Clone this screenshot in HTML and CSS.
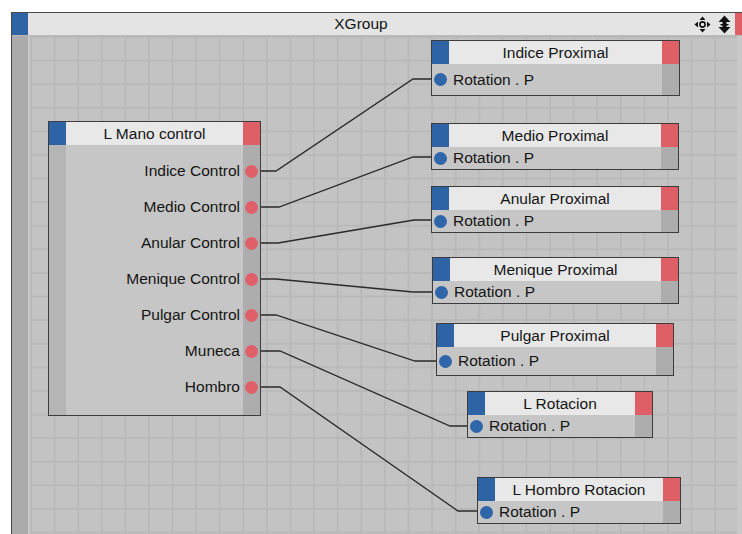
FILE: index.html
```html
<!DOCTYPE html>
<html lang="en">
<head>
  <meta charset="UTF-8" />
  <title>XGroup</title>
  <link rel="stylesheet" href="styles.css">
</head>
<body>
  <div class="xgroup">
    <div class="titlebar">
      <div class="tb-blue"></div>
      <div class="tb-name">XGroup</div>
      <div class="tb-icons">
        <svg width="17" height="17" viewBox="0 0 17 17">
          <circle cx="8.5" cy="8.5" r="2.6" fill="none" stroke="#111" stroke-width="1.6"/>
          <path d="M8.5 0.5 L11.5 4 L5.5 4 Z M8.5 16.5 L11.5 13 L5.5 13 Z M0.5 8.5 L4 5.5 L4 11.5 Z M16.5 8.5 L13 5.5 L13 11.5 Z" fill="#111"/>
        </svg>
        <svg width="15" height="19" viewBox="0 0 15 19">
          <path d="M7.5 0.5 L13.5 7 L1.5 7 Z M7.5 18.5 L13.5 12 L1.5 12 Z" fill="#111"/>
          <rect x="5.5" y="6" width="4" height="7" fill="#111"/>
          <rect x="3.5" y="9" width="8" height="1.5" fill="#111"/>
        </svg>
      </div>
      <div class="tb-red"></div>
    </div>

    <div class="xg-body">
      <div class="xg-strip"></div>
      <div class="canvas">
        <svg class="wires" width="712" height="498" viewBox="30 36 712 498">
          <g fill="none" stroke="#2a2a2a" stroke-width="1.3">
            <polyline points="256,171 276,171 413,79 434,79"/>
            <polyline points="256,207 279,207 413,157 434,157"/>
            <polyline points="256,243 278,243 414,220 434,220"/>
            <polyline points="256,279 276,279 413,292 434,292"/>
            <polyline points="256,315 276,315 415,361 439,361"/>
            <polyline points="256,351 280,351 450,426 470,426"/>
            <polyline points="256,387 280,387 458,511 480,511"/>
          </g>
        </svg>

        <div class="node src">
          <div class="node-head">
            <div class="nh-blue"></div>
            <div class="nh-name">L Mano control</div>
            <div class="nh-red"></div>
          </div>
          <div class="src-body">
            <div class="src-left"></div>
            <div class="src-labels">
              <div class="out-row">Indice Control</div>
              <div class="out-row">Medio Control</div>
              <div class="out-row">Anular Control</div>
              <div class="out-row">Menique Control</div>
              <div class="out-row">Pulgar Control</div>
              <div class="out-row">Muneca</div>
              <div class="out-row">Hombro</div>
            </div>
            <div class="src-right">
              <div class="out-row"><span class="dot red"></span></div>
              <div class="out-row"><span class="dot red"></span></div>
              <div class="out-row"><span class="dot red"></span></div>
              <div class="out-row"><span class="dot red"></span></div>
              <div class="out-row"><span class="dot red"></span></div>
              <div class="out-row"><span class="dot red"></span></div>
              <div class="out-row"><span class="dot red"></span></div>
            </div>
          </div>
        </div>

        <div class="node dst n1">
          <div class="node-head"><div class="nh-blue"></div><div class="nh-name">Indice Proximal</div><div class="nh-red"></div></div>
          <div class="in-row"><div class="in-cell"><span class="dot blue"></span></div><div class="in-label">Rotation . P</div><div class="in-right"></div></div>
        </div>
        <div class="node dst n2">
          <div class="node-head"><div class="nh-blue"></div><div class="nh-name">Medio Proximal</div><div class="nh-red"></div></div>
          <div class="in-row"><div class="in-cell"><span class="dot blue"></span></div><div class="in-label">Rotation . P</div><div class="in-right"></div></div>
        </div>
        <div class="node dst n3">
          <div class="node-head"><div class="nh-blue"></div><div class="nh-name">Anular Proximal</div><div class="nh-red"></div></div>
          <div class="in-row"><div class="in-cell"><span class="dot blue"></span></div><div class="in-label">Rotation . P</div><div class="in-right"></div></div>
        </div>
        <div class="node dst n4">
          <div class="node-head"><div class="nh-blue"></div><div class="nh-name">Menique Proximal</div><div class="nh-red"></div></div>
          <div class="in-row"><div class="in-cell"><span class="dot blue"></span></div><div class="in-label">Rotation . P</div><div class="in-right"></div></div>
        </div>
        <div class="node dst n5">
          <div class="node-head"><div class="nh-blue"></div><div class="nh-name">Pulgar Proximal</div><div class="nh-red"></div></div>
          <div class="in-row"><div class="in-cell"><span class="dot blue"></span></div><div class="in-label">Rotation . P</div><div class="in-right"></div></div>
        </div>
        <div class="node dst n6">
          <div class="node-head"><div class="nh-blue"></div><div class="nh-name">L Rotacion</div><div class="nh-red"></div></div>
          <div class="in-row"><div class="in-cell"><span class="dot blue"></span></div><div class="in-label">Rotation . P</div><div class="in-right"></div></div>
        </div>
        <div class="node dst n7">
          <div class="node-head"><div class="nh-blue"></div><div class="nh-name">L Hombro Rotacion</div><div class="nh-red"></div></div>
          <div class="in-row"><div class="in-cell"><span class="dot blue"></span></div><div class="in-label">Rotation . P</div><div class="in-right"></div></div>
        </div>
      </div>
      <div class="xg-rstrip"></div>
    </div>
  </div>
</body>
</html>
```

FILE: styles.css
```css
* {
  box-sizing: border-box;
}

body {
  margin: 0;
  background: #ffffff;
  font-family: 'Liberation Sans', Arial, sans-serif;
  font-size: 15.5px;
  color: #151515;
  overflow: hidden;
}

.xgroup {
  margin: 12px 0 0 11px;
  width: 731px;
  height: 522px;
  border-top: 1px solid #4a4a4a;
  border-left: 1px solid #4a4a4a;
  display: flex;
  flex-direction: column;
}

/* title bar */
.titlebar {
  height: 23px;
  display: flex;
  background: #e4e4e4;
  border-bottom: 1px solid #b8b8b8;
}

.tb-blue {
  width: 16px;
  background: #2e64a6;
}

.tb-name {
  flex: 1;
  text-align: center;
  line-height: 22px;
}

.tb-icons {
  display: flex;
  align-items: center;
  gap: 6px;
  padding-right: 3px;
}

.tb-red {
  width: 7px;
  background: #de5f66;
}

/* body */
.xg-body {
  flex: 1;
  display: flex;
}

.xg-strip {
  width: 18px;
  background: #ababab;
  border-right: 2px solid #c9c9c9;
}

.xg-rstrip {
  width: 5px;
  background: #c9c9c9;
}

.canvas {
  flex: 1;
  position: relative;
  background-color: #c3c3c3;
  background-image:
    linear-gradient(to right, #b9b9b9 0, #b9b9b9 2px, transparent 2px),
    linear-gradient(to bottom, #b9b9b9 0, #b9b9b9 2px, transparent 2px);
  background-size: 23.6px 23.6px;
  overflow: hidden;
}

.wires {
  position: absolute;
  left: 0;
  top: 0;
}

/* nodes */
.node {
  position: absolute;
  border: 1px solid #3c3c3c;
  background: #c6c6c6;
  display: flex;
  flex-direction: column;
}

.node-head {
  height: 23px;
  display: flex;
  flex: none;
  background: #e8e8e8;
}

.nh-blue {
  width: 17px;
  background: #2e64a6;
}

.nh-red {
  width: 17px;
  background: #de5f66;
}

.nh-name {
  flex: 1;
  text-align: center;
  line-height: 23px;
  white-space: nowrap;
}

.dot {
  display: block;
  width: 13px;
  height: 13px;
  border-radius: 50%;
}

.dot.red {
  background: #e0606a;
}

.dot.blue {
  background: #2f66aa;
}

/* source node */
.src {
  left: 18px;
  top: 85px;
  width: 213px;
  height: 295px;
}

.src-body {
  flex: 1;
  display: flex;
}

.src-left {
  width: 17px;
  background: #b5b5b5;
}

.src-labels {
  flex: 1;
  padding: 8px 3px 0 0;
  text-align: right;
}

.src-right {
  width: 17px;
  background: #adadad;
  padding-top: 8px;
}

.out-row {
  height: 36px;
  line-height: 36px;
  display: flex;
  align-items: center;
  justify-content: flex-end;
  white-space: nowrap;
}

.src-right .out-row {
  justify-content: center;
}

/* destination nodes */
.in-row {
  flex: 1;
  display: flex;
}

.in-cell {
  width: 17px;
  display: flex;
  align-items: center;
  justify-content: center;
}

.in-label {
  flex: 1;
  display: flex;
  align-items: center;
  padding-left: 4px;
  white-space: nowrap;
}

.in-right {
  width: 17px;
  background: #adadad;
}

.n1 { left: 401px; top: 4px;   width: 249px; height: 56px; }
.n2 { left: 401px; top: 87px;  width: 248px; height: 47px; }
.n3 { left: 401px; top: 150px; width: 248px; height: 47px; }
.n4 { left: 402px; top: 221px; width: 247px; height: 47px; }
.n5 { left: 406px; top: 287px; width: 238px; height: 53px; }
.n6 { left: 437px; top: 355px; width: 186px; height: 47px; }
.n7 { left: 447px; top: 441px; width: 204px; height: 47px; }
```
